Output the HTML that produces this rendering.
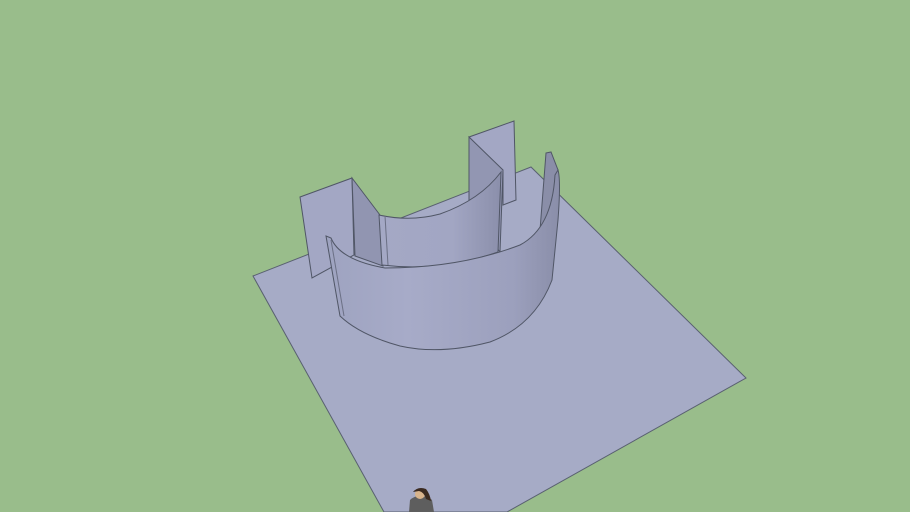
<!DOCTYPE html>
<html><head><meta charset="utf-8"><style>html,body{margin:0;padding:0;background:#99bd8b;overflow:hidden}svg{display:block}</style></head>
<body>
<svg width="910" height="512" viewBox="0 0 910 512" xmlns="http://www.w3.org/2000/svg">
<defs>
<linearGradient id="outer" x1="0" x2="1" y1="0" y2="0">
<stop offset="0" stop-color="#9ea3c0"/><stop offset="0.35" stop-color="#a7abc8"/><stop offset="0.8" stop-color="#9ca0bd"/><stop offset="1" stop-color="#8a8ea9"/>
</linearGradient>
<linearGradient id="inner" x1="0" x2="1" y1="0" y2="0">
<stop offset="0" stop-color="#a4a8c5"/><stop offset="0.6" stop-color="#a2a6c3"/><stop offset="1" stop-color="#8b8fab"/>
</linearGradient>
</defs>
<rect width="910" height="512" fill="#99bd8b"/>
<polygon points="253,276 531,167 746,378 507,512 384,512" fill="#a6abc6" stroke="#596070" stroke-width="1"/>
<!-- right back panel -->
<polygon points="469,137 514,121 516,200 503,205 503,172 469,137" fill="#a3a7c4" stroke="#505666" stroke-width="1"/>
<polygon points="469,137 503,170 500,252 469,212" fill="#9296b2" stroke="#505666" stroke-width="1"/>
<!-- left back panel -->
<polygon points="300,197 352,178 354,255 312,278" fill="#a3a7c4" stroke="#505666" stroke-width="1"/>
<polygon points="352,178 380,215 383,266 355,256" fill="#9195b1" stroke="#505666" stroke-width="1"/>
<!-- inner curved wall -->
<path d="M379,215 L382,265 Q440,272 498,252 L501,172 Q480,200 440,214 Q410,222 379,215 Z" fill="url(#inner)" stroke="#505666" stroke-width="1"/>
<line x1="385" y1="216" x2="388" y2="265" stroke="#6b7085"/>
<!-- right thin wall end -->
<path d="M546,153 L551,152 L558,170 L556,225 L540,230 Z" fill="#8a8ea8" stroke="#505666" stroke-width="1"/>
<!-- outer curved wall -->
<path d="M326,236 L331,238 Q340,260 385,268 Q460,268 520,245 Q552,228 555,175 L558,170 Q561,180 558,220 L552,280 Q535,325 490,342 Q440,355 400,346 Q360,335 340,316 Z" fill="url(#outer)" stroke="#505666" stroke-width="1"/>
<path d="M331,240 L344,316" stroke="#6b7085" fill="none"/>
<!-- person -->
<path d="M409,512 L410,500 Q414,496 420,496 Q428,496 432,500 L434,512 Z" fill="#5e5e5e"/>
<ellipse cx="420" cy="494" rx="5" ry="5" fill="#d8b48c"/>
<path d="M413,492 Q418,486 426,489 Q430,494 431,501 L426,499 Q424,492 419,491 Z" fill="#3a2a20"/>
</svg>
</body></html>
